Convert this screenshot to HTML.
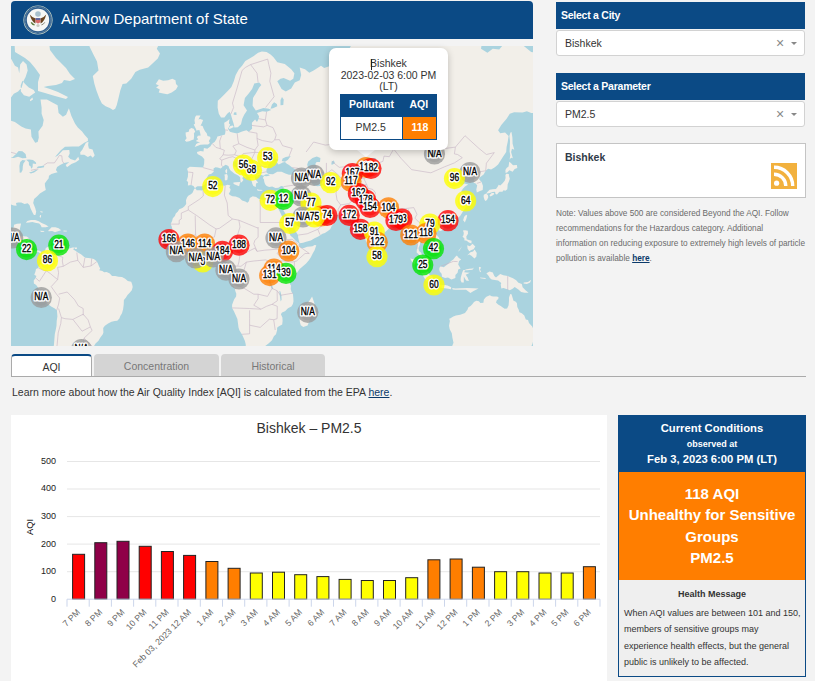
<!DOCTYPE html>
<html><head><meta charset="utf-8">
<style>
*{margin:0;padding:0;box-sizing:border-box}
html,body{width:815px;height:681px;overflow:hidden;background:#f3f3f3;font-family:"Liberation Sans",sans-serif;color:#333}
.abs{position:absolute}
.hdr{left:11px;top:1px;width:522px;height:38px;background:#0b4a85;border-radius:4px 4px 0 0}
.hdr .t{position:absolute;left:50px;top:9px;font-size:15px;color:#fff;line-height:17px;white-space:nowrap}
.seal{position:absolute;left:12px;top:4px;width:30px;height:30px}
.mapwrap{left:11px;top:46px;width:522px;height:300px;overflow:hidden}
.map{display:block}
.ml{font:bold 10px "Liberation Sans",sans-serif;letter-spacing:-0.2px;fill:#fff;text-anchor:middle;stroke:#fff;stroke-width:3.2px;stroke-linejoin:round}
.ml2{font:normal 10px "Liberation Sans",sans-serif;letter-spacing:0px;fill:#000;text-anchor:middle;stroke:#000;stroke-width:0.35px}
.popup{left:329px;top:48px;width:119px;height:102px;background:#fff;border-radius:7px;box-shadow:0 2px 7px rgba(0,0,0,.22)}
.tip{left:357px;top:150px;width:0;height:0;border-left:9px solid transparent;border-right:9px solid transparent;border-top:7px solid #fff}
.pt{position:absolute;left:0;width:119px;text-align:center;font-size:10.5px;line-height:11.5px;color:#333;white-space:nowrap}
.ptab{position:absolute;left:10.5px;top:46px;width:97px;height:45.5px;border:1px solid #0b4a85;border-collapse:collapse}
.sh{left:556px;width:249px;height:27px;background:#0b4a85;color:#fff;font-weight:bold;font-size:10.5px;line-height:27px;padding-left:5px;letter-spacing:-0.25px}
.sel{left:556px;width:249px;height:26px;background:#fff;border:1px solid #d2d2d2;border-radius:3px;font-size:10.5px;line-height:24px;padding-left:8px;color:#333}
.sel .x{position:absolute;left:219px;top:0px;color:#888;font-size:14px;font-weight:300}
.sel .ar{position:absolute;left:234px;top:11px;width:0;height:0;border-left:3px solid transparent;border-right:3px solid transparent;border-top:3.5px solid #888}
.box{left:556px;top:143px;width:250px;height:55px;background:#fff;border:1px solid #c4c4c4}
.box .b{position:absolute;left:8px;top:7px;font-weight:bold;font-size:10.5px;color:#2f3a48}
.rss{position:absolute;left:214px;top:19px;width:26px;height:26px;background:#f2b13e}
.note{left:556px;top:207px;width:259px;white-space:nowrap;font-size:8.25px;line-height:14.9px;color:#6b6b6b}
.note a,.learn a{color:#0b3a6a;font-weight:bold;text-decoration:underline}
.tab{top:354px;height:22px;font-size:10.5px;line-height:20px;text-align:center;border-radius:4px 4px 0 0}
.tab1{left:11px;width:81px;background:#fff;border:1px solid #aaa;border-top:2px solid #0b4a85;border-bottom:none;color:#333;line-height:22px}
.tab2{left:94px;width:125px;background:#d4d4d4;color:#777;line-height:25px}
.tab3{left:221px;width:104px;background:#d4d4d4;color:#777;line-height:25px}
.tline{left:11px;top:376px;width:795px;height:1px;background:#aaa}
.learn{left:12px;top:386px;font-size:10.5px;line-height:12px;color:#333;white-space:nowrap}
.learn a{font-weight:normal;color:#0b3a6a}
.chartp{left:11px;top:415px;width:596px;height:266px;background:#fff}
.ct{font-size:14px;fill:#333;text-anchor:middle;font-family:"Liberation Sans",sans-serif}
.yl{font-size:9px;fill:#222;text-anchor:end;font-family:"Liberation Sans",sans-serif}
.xl{font-size:8.7px;fill:#666;text-anchor:end;font-family:"Liberation Sans",sans-serif}
.at{font-size:9.3px;fill:#111;text-anchor:middle;font-family:"Liberation Sans",sans-serif}
.cc{left:618px;top:415px;width:188px;height:262px;border:1px solid #0b4a85;background:#efefef}
.cch{position:absolute;left:0;top:0;width:186px;height:56px;background:#0b4a85;color:#fff;text-align:center;font-weight:bold}
.cco{position:absolute;left:0;top:56px;width:186px;height:108px;background:#ff7e00;color:#fff;text-align:center;font-weight:bold;font-size:15px;line-height:21.4px}
.hm{position:absolute;left:0;top:164px;width:186px;color:#333}
</style></head><body>
<div class="abs hdr">
 <svg class="seal" viewBox="0 0 30 30">
  <circle cx="15" cy="15" r="14.6" fill="#c8d6c8"/>
  <circle cx="15" cy="15" r="13.9" fill="#2c5c8c"/>
  <circle cx="15" cy="15" r="12.9" fill="none" stroke="#9fb6c6" stroke-width="0.7" stroke-dasharray="0.8 0.6"/>
  <circle cx="15" cy="15" r="11.2" fill="#f6f7f5"/>
  <circle cx="15" cy="9" r="2.8" fill="#a8c0cc"/>
  <path d="M6.8 9.5 Q9 12.5 12.6 13.6 L12.4 18.5 Q8.5 16.5 6.8 9.5Z M23.2 9.5 Q21 12.5 17.4 13.6 L17.6 18.5 Q21.5 16.5 23.2 9.5Z" fill="#6a4520"/>
  <path d="M12.6 13.2 h4.8 v3.8 q-2.4 2.8 -4.8 0z" fill="#d86a6a"/>
  <path d="M12.6 13.2 h4.8 v1.6 h-4.8z" fill="#3a62a8"/>
  <path d="M8.2 17.3 q1.4 2.4 3.4 2.6" stroke="#5d7d3d" stroke-width="1.4" fill="none"/>
  <path d="M21.8 17.3 q-1.4 2.4 -3.4 2.6" stroke="#8a8a7a" stroke-width="1" fill="none"/>
  <circle cx="15" cy="20.5" r="1.6" fill="#c8c8c0"/>
 </svg>
 <div class="t">AirNow Department of State</div>
</div>
<div class="abs mapwrap">
<svg class="map" width="522" height="300" viewBox="0 0 522 300">
<rect width="522" height="300" fill="#aad3df"/>
<path d="M-81.4 -23.2L-17.4 -23.2L-8.9 -4.1L-5.7 0.7L-2.5 9.3L0.7 13.7L3.9 19.8L7.1 21.5L8.2 27.2L9.2 18.6L12.0 14.9L15.6 18.6L16.7 24.4L14.6 31.1L12.4 35.3L10.7 41.5L7.1 45.4L2.8 47.8L-1.4 53.5L-5.7 62.3L-6.1 68.7L-2.5 73.9L3.9 75.9L10.3 80.5L14.6 82.4L19.9 83.5L20.5 90.8L24.2 96.7L26.7 96.0L27.8 91.5L27.4 85.4L31.6 79.8L32.7 73.9L30.6 67.8L30.6 61.5L29.5 53.5L35.9 53.5L42.3 57.1L46.6 59.3L47.6 67.0L51.9 70.7L55.1 68.7L57.9 62.3L60.4 69.9L64.1 77.8L66.8 81.6L71.1 85.4L73.7 89.0L76.9 92.5L76.9 95.0L73.2 96.7L67.9 100.4L61.5 100.4L54.0 100.7L49.8 104.3L45.5 109.2L44.0 111.0L46.6 109.8L51.9 104.3L58.3 104.0L58.7 107.6L57.2 110.7L59.4 112.9L64.1 114.4L67.3 110.7L68.3 113.8L64.7 116.3L60.4 118.1L56.0 121.3L54.7 119.0L58.3 116.0L53.0 116.9L49.1 119.0L46.1 121.0L44.9 124.0L46.6 126.3L43.8 127.1L40.4 128.0L38.0 129.7L37.6 132.5L35.9 134.4L33.8 137.4L34.0 140.1L34.8 144.0L32.1 145.6L28.9 147.6L26.5 150.0L23.1 153.0L22.2 157.0L24.2 161.9L25.2 165.7L24.4 169.0L22.9 169.0L21.4 166.2L19.5 162.3L18.6 159.2L16.7 157.2L13.5 157.9L10.3 156.5L7.1 156.5L5.0 157.0L5.6 159.7L2.8 159.4L-0.4 158.4L-4.6 158.4L-8.9 161.4L-11.7 164.3L-12.1 168.3L-12.5 175.3L-11.5 179.9L-9.3 183.1L-6.3 184.9L-1.4 184.2L1.3 183.8L2.8 181.0L3.0 178.8L6.0 177.8L10.1 177.6L9.2 181.5L8.6 184.9L7.5 186.7L7.5 190.0L9.2 190.5L12.4 190.2L15.6 190.5L18.2 192.2L17.8 195.5L17.6 199.2L17.3 201.2L19.7 204.0L22.0 205.3L25.2 204.7L27.8 204.5L30.8 206.0L32.7 205.8L34.2 204.2L34.8 201.9L37.6 200.6L40.8 199.5L42.9 197.9L44.0 199.2L42.7 201.0L43.4 203.2L44.4 201.4L46.1 199.9L46.8 198.6L48.3 199.9L50.2 201.6L54.0 201.9L58.3 202.5L61.5 201.6L63.8 201.6L62.1 203.2L64.7 204.9L66.8 206.6L70.0 208.3L72.6 210.5L74.3 211.8L77.5 212.0L80.7 212.4L82.8 213.1L85.4 215.0L86.7 217.1L88.0 220.3L89.2 222.5L88.2 224.2L91.4 225.0L93.1 226.3L95.6 226.1L98.8 227.4L101.0 230.1L104.2 229.9L107.4 230.8L111.0 231.0L114.2 232.7L116.8 235.1L120.2 235.7L121.2 238.5L121.7 240.9L120.8 244.3L118.7 246.7L116.5 248.9L114.8 251.7L112.9 253.9L112.7 258.7L112.1 263.2L111.0 267.3L109.3 270.0L108.4 272.5L106.3 274.8L103.7 275.0L100.5 275.7L97.1 277.4L93.9 279.7L92.2 282.1L92.4 286.4L91.8 288.3L89.2 291.7L87.5 294.7L84.5 297.5L82.8 300.5L80.3 303.4L76.4 304.1L73.2 305.7L73.9 308.3L67.9 317.9L42.3 317.9L39.1 309.7L41.2 305.2L42.9 299.2L43.4 293.0L43.8 288.1L44.6 284.5L45.5 279.7L45.7 275.0L46.4 270.4L45.9 264.3L43.4 262.3L40.6 260.7L35.9 257.6L33.1 254.3L32.1 251.0L30.4 248.2L28.9 245.2L26.9 241.5L25.2 239.1L22.9 237.4L22.7 234.4L24.6 231.9L25.4 229.9L23.3 228.7L24.4 225.7L25.0 223.1L27.2 222.0L28.2 219.3L30.6 217.1L31.0 214.3L30.8 210.7L29.7 209.0L28.9 207.0L26.3 205.5L24.8 206.8L24.4 208.8L22.7 208.3L21.0 207.0L17.6 206.6L15.0 203.6L13.1 202.7L12.6 200.6L9.7 196.8L7.1 196.2L2.8 194.7L-1.0 193.3L-4.6 190.0L-10.0 190.7L-14.2 189.3L-28.1 181.0L-81.4 181.0ZM3.0 -11.4L37.0 -11.4L39.0 4.0L45.0 12.0L49.0 16.0L55.0 22.0L59.0 28.0L64.0 33.0L59.0 35.0L53.0 34.0L51.0 37.0L45.0 39.0L37.0 40.0L32.7 41.0L39.0 43.0L47.0 46.0L57.0 51.0L55.0 53.0L44.0 50.0L34.0 47.0L27.0 45.0L27.0 36.0L29.0 29.0L24.0 22.0L19.0 16.0L14.0 12.0L9.0 9.0L4.0 6.0ZM9.9 45.4L12.9 49.3L18.2 50.7L24.2 46.4L22.7 44.0L17.8 41.5L14.1 37.9L11.4 34.8L9.7 39.5ZM18.8 53.9L21.4 51.6L22.0 53.5L19.3 55.3ZM-4.6 -2.0L-6.8 -11.4L-0.4 -19.2L25.2 -19.2L25.2 -6.3ZM40.2 -56.0L42.3 -36.2L55.1 -31.8L71.1 -27.4L75.4 -15.2L78.6 0.7L82.8 9.3L86.0 15.6L87.5 24.4L81.8 30.0L83.3 37.4L85.4 44.4L88.2 52.1L90.9 57.5L94.6 60.2L98.8 61.9L102.0 64.1L104.2 62.8L105.7 59.3L107.4 52.5L109.3 44.4L111.6 37.9L115.3 37.4L120.2 32.7L124.4 26.1L128.7 23.8L137.2 21.5L141.5 17.4L146.8 12.5L149.0 7.4L145.8 2.8L149.0 -4.1L152.2 -15.2L155.4 -31.8L153.2 -73.2ZM144.7 37.9L147.9 33.2L152.2 34.8L157.1 34.3L161.3 32.7L164.5 34.3L165.0 37.9L166.9 40.0L165.0 43.5L160.7 46.4L156.4 48.3L152.2 47.4L147.7 46.4L148.8 43.5L145.1 41.5L147.9 39.5ZM69.4 108.8L73.2 108.8L76.9 111.0L79.6 109.5L81.8 111.7L83.7 109.2L82.4 106.0L81.6 103.4L77.9 102.4L77.1 99.1L77.5 95.7L74.9 96.7L73.2 100.1L71.3 103.7L69.2 106.3ZM14.8 176.7L16.3 175.1L19.9 173.9L24.2 173.9L27.8 175.3L30.6 176.9L34.2 178.5L37.6 180.6L34.8 181.3L30.6 181.3L29.9 179.4L28.2 177.4L24.2 176.7L21.4 176.0L17.8 176.5ZM37.2 184.7L40.6 181.3L44.4 181.3L47.6 182.2L50.2 184.2L47.6 184.9L44.0 186.2L41.2 185.1L37.6 185.3ZM28.9 184.7L33.1 184.9L33.3 185.8L30.6 186.0L28.9 185.1ZM52.5 184.4L56.0 184.7L55.7 185.6L52.5 185.6ZM63.8 201.4L66.0 201.4L65.8 202.9L63.8 202.9ZM29.1 165.2L31.6 165.5L31.4 166.7L29.5 165.9ZM29.1 169.0L30.1 169.3L29.9 171.8L28.6 171.1ZM184.0 142.2L182.5 140.1L180.1 139.0L176.9 139.5L177.1 136.0L175.6 134.7L176.9 130.8L177.1 126.0L176.1 122.8L178.8 120.7L183.5 121.0L188.4 121.3L192.1 121.6L193.1 118.1L193.3 113.2L191.0 110.4L186.5 107.9L185.9 106.0L189.5 105.0L192.5 105.6L192.9 102.1L196.3 102.7L199.3 100.4L201.2 97.4L203.6 96.0L205.5 92.9L206.4 90.4L210.6 89.4L214.0 88.6L214.5 85.0L213.6 81.6L213.2 76.7L216.2 75.1L218.5 73.1L217.9 77.4L219.2 78.6L217.0 82.8L218.9 85.7L221.5 86.5L226.2 87.6L231.1 85.4L235.4 84.3L237.7 85.7L241.1 82.8L240.9 76.7L244.1 73.5L246.0 75.9L247.7 72.7L248.0 70.3L246.0 67.0L251.4 65.3L255.6 65.7L260.3 64.1L257.8 62.8L252.4 61.9L244.8 64.5L241.6 59.7L242.0 52.1L246.0 45.4L248.2 41.5L250.3 38.9L248.2 36.4L243.3 37.4L241.1 43.0L237.5 47.8L233.9 52.1L232.6 59.3L236.0 64.5L233.2 68.7L231.3 72.7L230.0 78.2L226.8 81.3L223.4 81.6L222.8 78.2L221.3 73.5L219.8 68.2L218.5 65.7L216.2 67.8L213.4 71.5L210.0 71.5L207.8 67.8L206.6 61.5L206.8 54.8L209.8 52.1L214.0 47.8L217.2 44.4L220.4 41.0L222.8 35.3L224.7 28.9L227.9 23.2L231.1 19.8L234.3 14.9L238.6 12.5L242.8 10.0L247.1 6.7L250.9 5.4L255.6 6.1L259.9 8.7L262.5 11.2L266.3 16.2L273.8 18.0L280.2 23.2L283.4 27.2L282.3 32.7L279.1 34.8L272.7 32.1L269.5 32.7L266.3 35.3L270.6 43.0L274.8 45.4L280.2 42.5L283.8 36.4L288.7 34.3L290.2 28.9L288.7 21.5L294.0 23.2L298.3 26.7L302.6 24.4L310.0 19.8L313.2 22.1L319.6 19.8L323.9 20.9L325.6 13.7L331.4 15.6L336.7 18.6L339.3 21.5L341.4 19.8L338.4 15.6L338.8 7.4L338.4 2.8L342.0 -4.1L344.2 -7.7L345.2 -23.2L409.2 -50.8L437.0 -15.2L447.6 -12.2L464.7 -11.4L471.1 -4.1L470.0 2.8L476.4 6.7L481.8 2.8L488.2 3.4L493.5 -2.7L498.8 -4.8L509.5 -2.7L520.2 6.1L533.0 7.4L558.6 12.5L569.2 54.8L558.6 83.5L530.8 97.7L528.7 75.9L541.5 57.1L537.2 54.8L526.6 66.6L520.2 67.0L515.9 65.3L511.6 66.6L503.1 66.2L498.8 67.8L495.6 72.7L490.3 79.0L487.1 84.3L489.2 87.2L494.1 86.5L497.6 90.1L496.7 96.0L495.6 101.1L495.2 106.0L492.0 110.7L487.1 118.4L483.9 121.3L480.1 123.4L477.1 122.8L474.7 124.8L472.6 128.5L469.0 131.3L467.9 133.0L470.7 136.3L472.0 140.1L471.7 144.0L469.0 145.1L465.8 146.4L465.3 143.5L466.2 139.5L464.7 137.4L462.6 136.8L463.4 133.0L461.7 131.6L458.3 131.9L455.1 134.4L456.0 131.3L456.8 129.7L454.0 128.8L450.8 131.6L448.1 133.8L446.8 135.5L448.7 137.9L450.8 139.3L453.4 137.4L457.2 138.5L454.0 140.6L451.9 142.7L450.2 145.3L452.5 146.9L453.8 151.0L456.0 153.2L454.0 155.5L456.2 157.5L455.1 160.9L453.2 163.5L451.0 167.1L449.3 169.7L446.6 172.3L443.4 174.4L439.5 175.8L437.0 176.5L433.8 177.4L431.4 178.3L431.2 180.4L430.1 177.8L427.4 177.2L424.2 178.8L423.1 180.6L421.6 183.3L423.3 186.7L425.9 189.3L428.0 191.8L429.1 196.2L428.9 199.7L426.7 201.0L424.2 202.3L422.5 204.2L420.1 206.2L419.5 203.8L419.9 202.1L417.8 201.9L415.6 201.0L414.1 198.4L411.4 197.3L411.2 195.5L409.2 195.7L409.0 198.4L407.5 202.1L408.0 204.9L409.9 206.6L411.4 209.8L413.9 211.3L415.6 212.8L416.5 215.4L416.5 218.6L418.2 221.4L416.7 221.8L414.6 220.5L412.0 218.6L410.5 216.1L409.9 212.8L409.4 210.5L407.1 207.7L405.6 206.4L406.0 202.1L406.5 198.8L405.4 195.5L404.5 191.1L403.9 188.7L401.8 188.2L399.4 190.5L397.1 190.0L397.5 186.7L396.9 183.8L395.4 181.9L393.9 179.2L392.6 177.6L391.7 175.1L389.2 176.0L386.8 176.7L384.7 177.4L381.5 178.5L381.3 180.1L378.9 181.5L376.2 184.2L373.6 186.4L371.5 188.7L369.1 191.3L367.0 194.7L366.8 197.7L366.1 200.6L364.9 202.7L363.2 205.3L361.2 207.3L359.1 205.3L357.6 200.3L355.5 196.8L354.2 192.7L352.7 188.9L351.6 184.4L351.2 181.0L351.0 178.1L350.6 175.8L347.4 178.8L345.2 178.8L343.1 175.8L345.7 174.4L342.7 172.8L339.5 170.7L338.0 168.5L333.5 169.0L328.2 169.3L322.8 168.5L319.2 167.8L317.5 165.2L315.8 164.5L312.8 165.9L309.6 164.7L305.8 162.6L303.6 159.4L302.6 157.0L300.0 157.2L298.3 158.7L299.2 161.6L300.9 164.3L302.6 165.9L303.0 168.1L303.8 169.5L304.7 166.9L306.0 167.4L306.0 169.5L305.6 171.1L307.9 171.4L311.1 171.4L313.7 169.3L315.4 167.6L316.0 166.4L316.2 169.5L317.1 171.4L319.2 172.5L321.3 173.2L323.5 175.5L322.4 178.1L320.7 180.1L319.2 183.3L316.9 184.9L313.9 186.9L311.5 187.8L307.3 190.5L303.6 192.2L299.8 194.4L295.1 195.7L292.1 196.8L288.7 197.3L288.1 195.5L287.2 191.8L287.0 188.9L285.1 186.0L283.2 182.6L280.4 179.7L279.3 176.9L278.2 173.0L275.9 170.0L274.0 167.1L271.6 163.1L270.1 161.1L270.6 158.7L269.5 156.2L268.9 154.2L269.9 152.0L270.8 149.4L272.3 145.8L272.5 143.2L272.7 140.6L270.1 140.1L267.4 141.7L264.4 141.9L261.2 140.6L258.2 140.9L255.6 140.1L254.1 138.2L253.3 136.0L252.9 133.3L251.8 131.9L253.1 130.0L256.7 128.8L258.2 128.0L256.7 128.5L253.9 128.8L252.2 129.7L250.3 128.8L247.1 129.1L246.2 130.8L244.1 130.0L244.1 133.0L245.4 134.4L247.1 136.6L245.0 137.4L244.8 140.9L243.0 140.3L242.2 139.8L241.3 137.7L240.9 136.0L240.1 133.8L238.8 132.2L237.3 130.2L237.5 127.1L236.0 124.8L233.2 122.8L230.0 121.3L228.1 119.0L226.4 116.9L224.9 116.3L225.1 114.7L222.4 115.7L222.1 118.7L223.0 120.2L224.9 121.3L226.2 124.3L227.9 126.0L230.2 126.0L230.0 127.4L232.8 129.1L235.4 131.1L234.9 131.9L232.4 130.2L231.3 132.2L232.4 134.1L231.1 135.8L229.8 136.8L229.4 134.4L229.2 131.3L227.5 129.7L225.8 128.8L223.6 127.7L221.5 126.0L219.6 124.5L218.3 122.5L217.4 119.9L214.7 118.7L211.9 120.5L209.8 122.5L206.6 121.6L204.4 121.3L202.5 122.5L202.7 125.7L200.4 127.7L197.8 128.5L195.9 131.6L195.3 133.3L196.3 134.9L194.6 136.3L194.2 137.9L192.3 139.5L191.2 140.3L186.5 140.3L185.2 141.1ZM183.3 142.7L181.4 146.9L179.5 148.4L177.6 149.4L176.1 151.2L175.0 154.2L175.2 157.9L173.5 160.2L171.4 161.9L168.2 163.3L166.9 165.5L164.8 167.4L163.9 170.0L161.8 172.3L161.1 175.1L159.6 178.1L160.7 180.4L161.3 182.9L160.9 186.7L160.1 190.9L158.6 192.9L159.6 194.7L160.1 197.3L161.3 198.8L163.5 200.8L165.4 202.7L167.1 204.7L168.4 206.8L170.3 209.2L172.4 210.5L175.0 212.6L178.4 214.8L180.1 215.2L183.1 214.1L185.2 213.7L188.4 213.7L191.2 214.3L193.8 213.3L197.0 212.2L199.7 211.3L202.3 210.9L205.3 211.1L207.0 212.6L208.5 215.4L210.8 215.2L213.8 214.8L215.7 216.3L216.8 218.2L216.8 220.3L216.0 222.5L215.7 225.2L214.9 226.7L216.4 229.9L218.9 232.1L221.1 234.4L221.9 237.0L222.6 240.0L223.8 242.4L224.3 245.0L225.3 247.8L225.1 250.4L223.2 253.2L222.1 255.9L221.1 258.7L221.1 261.9L222.8 265.0L224.5 268.8L226.4 273.0L226.8 276.0L227.5 281.6L228.5 284.5L230.9 288.3L232.4 291.5L233.9 295.0L234.7 298.2L234.9 301.6L235.6 303.1L238.6 303.9L243.9 301.8L248.2 302.1L250.9 301.3L254.6 299.8L257.8 297.2L261.0 294.2L262.9 290.3L265.0 288.3L266.1 284.2L266.1 281.8L267.6 280.4L271.2 278.5L271.6 275.0L271.4 271.6L269.9 268.2L271.0 266.6L274.0 265.2L277.0 262.3L280.4 260.5L281.9 258.1L282.5 255.2L282.3 251.7L281.9 247.8L280.6 246.0L279.7 243.0L280.0 239.6L278.9 237.9L279.5 234.9L281.0 232.7L282.5 229.9L284.4 228.4L286.4 226.3L288.7 223.1L291.9 220.3L295.1 217.6L297.9 214.3L300.0 211.1L301.7 207.5L303.6 204.2L304.5 201.6L305.3 199.2L303.6 199.0L301.5 200.3L299.4 200.6L296.2 200.8L293.0 201.9L290.8 202.3L288.9 201.0L288.1 199.7L287.4 198.8L288.3 197.7L286.6 196.2L284.6 194.7L283.2 192.9L281.2 191.1L279.7 190.0L278.2 186.7L277.0 184.2L275.7 180.6L275.3 178.5L274.6 176.2L272.3 173.0L271.6 171.8L270.1 168.3L268.4 164.7L267.4 162.8L265.9 160.2L265.2 157.9L265.7 157.9L266.9 161.1L268.9 162.8L269.5 161.9L270.4 158.7L269.1 154.5L267.4 154.7L264.6 154.5L262.0 153.5L259.9 154.0L257.8 155.2L254.6 154.2L249.7 153.5L247.1 152.5L245.2 151.0L241.8 150.2L238.8 152.0L237.9 155.2L236.4 156.7L234.3 155.5L231.1 154.5L228.5 152.0L224.7 150.5L221.5 150.2L219.8 149.4L217.7 147.9L219.2 145.3L219.6 143.2L218.3 141.4L219.4 139.5L217.7 139.0L216.2 138.7L214.0 139.8L209.8 139.5L206.6 140.3L202.9 140.1L200.2 140.6L198.0 141.1L194.8 142.7L192.7 144.0L191.0 144.5L188.4 144.3L185.7 144.3L184.6 142.4ZM301.1 250.4L303.0 255.9L303.6 258.3L301.9 261.4L301.3 265.4L300.0 269.3L298.3 275.0L296.6 279.5L292.3 280.9L289.8 279.2L288.9 276.2L288.5 272.3L290.4 268.6L290.4 265.4L289.8 261.9L291.9 259.6L295.1 258.5L297.2 256.5L298.9 253.9ZM366.4 203.6L367.4 204.0L369.1 206.4L370.4 208.8L370.0 210.9L367.6 212.0L366.6 211.1L366.1 208.6L366.1 205.8ZM183.7 101.1L186.9 99.7L189.5 98.7L193.3 98.4L197.0 98.4L198.9 97.0L197.8 95.0L199.5 92.2L199.1 90.8L196.5 90.1L195.7 87.2L194.2 85.4L192.7 82.8L191.6 80.1L189.5 79.4L190.6 77.8L192.1 73.9L189.1 73.1L187.4 73.5L189.5 69.5L185.2 69.5L184.2 71.1L183.5 74.3L184.0 77.8L182.7 78.6L184.2 81.6L185.2 83.5L185.2 84.6L188.4 83.9L189.1 86.8L189.7 89.4L186.9 89.7L185.9 91.5L187.2 93.2L184.8 95.0L186.7 95.7L189.1 96.3L186.9 97.0L185.2 98.0ZM182.7 93.6L183.1 90.1L182.9 87.6L184.2 85.4L182.7 82.8L180.3 82.0L178.2 83.5L177.8 85.7L174.6 86.5L174.8 89.4L175.6 92.2L173.9 94.6L175.4 95.7L178.2 95.3L181.0 93.9ZM222.4 136.6L224.7 136.3L229.2 136.0L228.1 140.3L226.2 139.5L222.6 137.9ZM213.4 128.5L216.0 128.0L216.8 130.0L216.4 133.8L214.9 134.4L213.8 134.1L213.8 130.5ZM214.2 124.8L215.7 122.8L216.2 124.0L216.0 127.4L214.7 126.8ZM246.0 143.2L248.2 143.8L252.0 144.0L250.3 144.8L247.1 144.8L246.0 144.0ZM264.8 144.8L267.4 144.0L269.7 143.0L268.2 145.1L266.1 145.8L265.0 145.6ZM218.3 83.1L219.8 82.4L222.8 80.9L221.7 79.4L219.4 80.1L217.7 82.0ZM475.2 147.6L476.4 146.1L478.6 143.8L481.8 143.2L485.0 143.0L486.5 141.1L487.7 138.7L489.2 139.5L491.4 137.4L493.7 134.7L494.6 131.9L494.4 129.1L495.4 127.7L497.8 128.0L498.0 130.0L498.8 132.7L497.8 135.8L496.7 138.2L496.5 140.9L496.3 143.2L494.4 144.8L492.6 144.3L491.4 145.8L488.6 145.8L487.7 146.6L486.0 148.4L484.5 147.9L484.1 145.8L481.6 146.1L478.6 146.9L476.0 147.6ZM472.8 148.7L475.2 147.6L476.9 149.2L477.3 151.2L476.0 154.0L474.3 155.0L473.4 153.5L472.6 150.7ZM478.4 149.2L480.7 146.9L482.8 146.9L483.3 147.9L481.8 149.2L479.6 150.5ZM494.6 127.1L494.4 124.0L495.6 121.9L497.6 120.5L498.2 115.7L499.9 116.9L502.0 119.3L505.9 119.0L506.3 121.9L503.7 123.1L501.6 125.7L498.4 124.3L496.5 126.3ZM498.6 113.5L500.1 111.7L501.8 112.3L501.0 109.2L500.1 106.0L501.0 102.7L503.3 103.7L501.6 97.7L501.4 91.5L500.5 86.1L499.5 86.5L498.4 89.7L499.0 95.0L498.8 100.4L498.6 105.6L499.3 109.2ZM452.1 174.2L453.2 170.7L455.1 168.8L456.2 169.5L455.3 173.0L453.8 176.5L453.2 175.5ZM427.6 182.9L429.5 181.0L431.6 180.8L432.7 181.9L431.2 184.2L429.5 185.1L427.8 184.4ZM451.9 184.4L454.0 184.2L456.8 184.7L457.0 187.8L455.3 190.5L455.7 193.3L457.9 194.0L460.6 194.7L460.4 197.5L457.9 196.6L455.7 194.7L453.2 194.2L453.6 192.7L451.5 190.5L452.5 189.3L452.8 186.7ZM456.2 209.6L459.4 206.2L462.1 205.5L463.6 203.6L465.8 207.0L465.3 210.7L463.4 212.6L460.4 209.8L458.3 208.6ZM456.2 199.2L458.9 200.3L461.5 197.7L464.3 200.6L462.6 203.2L460.4 204.0L458.3 205.3L456.6 202.7ZM445.9 206.6L448.7 204.2L451.0 200.3L450.4 201.0L446.8 205.8ZM428.4 221.8L429.7 220.3L432.7 221.2L437.0 218.0L440.2 215.0L442.3 213.5L444.4 210.7L445.9 209.6L447.6 211.8L450.2 213.5L448.1 215.0L447.2 218.6L449.6 222.5L447.2 223.5L446.6 226.7L444.4 228.9L444.4 232.1L440.4 233.4L437.0 231.4L434.2 232.1L431.0 230.8L430.6 227.8L428.9 225.7L428.2 223.5ZM399.2 212.6L403.9 213.5L406.7 216.9L409.9 219.7L412.6 221.2L415.6 223.5L417.3 226.7L418.8 229.3L422.0 231.0L421.8 235.3L421.4 237.2L418.8 237.0L415.6 234.9L413.5 232.3L410.9 227.8L408.8 224.6L406.7 221.4L403.9 218.6L401.1 216.1ZM420.3 239.1L422.2 237.2L425.2 237.4L427.6 238.7L431.6 239.1L434.0 238.9L436.5 239.4L440.2 241.3L440.0 243.2L435.9 242.6L431.6 241.9L427.4 241.3L422.9 240.4L420.8 239.6ZM441.2 241.9L444.4 242.4L449.8 242.2L456.2 241.9L462.6 242.2L467.5 242.6L462.6 245.0L459.4 246.9L455.1 243.7L449.8 243.7L444.4 243.7L441.7 243.4ZM450.6 236.4L452.8 236.6L452.8 230.4L455.1 234.4L457.9 234.9L456.6 231.4L454.7 228.7L458.9 226.7L455.7 226.5L453.2 226.3L454.5 223.5L458.3 222.7L461.5 222.5L463.0 221.4L461.5 223.7L456.2 224.2L452.3 224.0L451.3 226.3L449.8 231.6L449.6 234.2ZM467.9 220.8L470.2 221.4L469.0 223.5L470.2 226.3L468.8 225.7L468.1 223.3ZM469.0 231.4L474.9 231.9L474.3 232.9L469.4 232.3ZM475.4 227.2L478.6 225.5L481.8 226.5L483.3 229.9L485.0 231.6L489.2 228.0L492.4 229.3L496.7 230.1L502.0 232.3L505.2 234.2L507.4 236.8L510.8 238.1L511.6 241.3L514.8 244.5L517.6 246.7L513.8 246.7L510.1 246.0L507.4 243.4L503.7 241.1L501.6 242.8L498.8 244.3L496.3 243.2L492.4 241.9L490.3 242.6L489.7 238.5L490.3 237.0L487.1 234.4L483.9 234.0L480.7 233.6L478.8 232.1L477.7 230.1L476.0 228.0ZM512.7 236.4L517.0 235.9L520.2 233.8L519.1 236.4L515.9 238.1L512.5 237.4ZM438.2 272.7L439.5 272.3L442.3 270.4L444.9 269.5L449.3 268.8L454.0 267.0L456.6 263.6L457.2 261.4L459.6 259.9L461.5 257.9L463.0 256.1L465.3 254.8L467.9 255.2L469.4 257.0L472.4 256.8L472.8 253.7L474.1 252.1L475.4 250.8L478.8 249.3L480.7 250.2L482.8 250.4L485.6 250.4L487.5 251.0L487.3 253.0L485.8 254.3L485.0 256.5L487.1 258.5L489.7 259.9L491.8 261.4L493.7 262.8L496.1 262.5L497.6 259.2L498.0 254.8L498.0 251.5L499.3 248.0L500.5 248.2L501.6 251.7L502.5 254.8L504.4 255.4L505.9 257.0L506.3 261.0L507.6 263.6L508.4 266.3L510.8 267.3L513.3 269.5L514.8 273.4L517.0 274.1L518.0 277.1L521.2 280.4L522.5 283.5L523.6 288.3L522.7 293.0L521.4 298.0L520.2 300.5L518.0 304.4L515.9 312.4L473.2 317.9L441.2 307.0L441.0 300.5L442.5 296.7L441.4 291.7L440.8 287.3L438.7 283.3L438.0 279.7L438.9 275.0Z" fill="#f2efe9"/>
<path d="M257.8 128.0L262.0 128.3L266.3 125.7L270.6 125.7L274.4 127.4L278.0 128.8L282.3 128.5L284.6 126.8L284.4 123.4L281.2 121.6L278.0 119.0L275.5 117.5L274.0 116.0L271.6 116.6L269.9 117.5L267.6 118.4L265.2 115.7L267.6 113.8L264.2 112.3L261.6 112.3L259.9 114.4L259.0 116.9L257.3 118.4L256.9 121.3L255.4 123.7L255.6 126.8ZM270.8 115.0L274.0 115.7L277.0 113.8L279.7 110.1L277.4 110.4L274.8 111.0L271.6 112.6ZM253.1 130.0L255.6 130.2L258.8 129.4L257.8 128.5L254.6 128.5ZM296.2 118.4L297.2 122.8L298.7 125.7L300.9 129.1L301.7 130.8L301.1 134.1L300.2 136.3L301.5 138.2L303.6 139.5L306.4 140.3L310.9 139.8L310.9 137.4L310.0 133.3L309.0 131.3L308.3 128.0L308.8 126.0L307.9 124.3L306.0 121.9L304.3 118.1L305.6 116.0L309.0 116.0L309.4 112.0L305.8 110.4L301.5 112.0L299.4 113.8L297.2 115.4ZM320.7 115.4L322.8 114.4L323.9 116.9L321.8 118.4L320.3 118.4ZM417.3 95.7L419.9 95.7L423.1 92.2L426.7 89.0L429.5 84.3L429.7 80.9L428.4 80.5L426.3 85.4L423.7 89.7L420.5 92.5L418.2 94.3ZM352.7 113.8L355.9 112.0L360.2 112.6L364.9 112.0L364.4 113.8L360.2 114.1L354.8 115.0ZM263.7 226.7L265.2 224.2L267.4 224.0L268.6 225.2L268.4 227.2L267.4 229.7L265.2 230.4L263.5 228.9ZM258.0 231.6L258.6 231.6L259.9 236.4L261.2 239.6L262.2 242.8L261.2 243.2L259.0 239.1L258.2 235.3ZM268.4 245.0L269.3 245.2L270.4 249.3L270.6 253.7L269.7 255.4L269.1 251.5L268.6 248.2ZM259.5 62.8L262.0 62.3L266.3 60.2L265.9 58.0L263.1 56.2L261.0 58.4ZM269.5 59.3L272.3 58.9L272.7 53.5L271.0 51.1L269.5 53.9ZM222.6 68.7L225.6 69.1L225.3 66.2L223.0 66.6ZM-0.6 111.7L1.8 111.0L5.0 107.9L7.7 105.0L11.4 105.3L14.6 107.9L15.4 112.0L11.4 112.3L7.1 110.7L2.8 112.0ZM8.6 126.6L10.1 126.8L11.6 124.0L11.8 120.5L12.4 117.5L14.6 114.4L11.4 114.1L9.2 116.0L8.4 119.9L8.6 123.4ZM15.2 113.8L18.2 113.5L22.0 114.1L24.8 116.3L25.2 118.1L21.8 117.5L21.6 121.3L20.1 122.8L19.7 120.5L18.0 119.3L17.8 116.0ZM18.0 126.6L19.9 127.4L23.1 126.6L27.4 123.4L24.6 124.0L21.0 125.7ZM25.7 121.9L29.5 121.9L33.1 121.3L33.1 119.6L30.6 119.9L26.9 120.5Z" fill="#aad3df"/>
<path d="M192.1 144.5L192.3 150.0L188.2 153.5L177.3 160.6L177.3 164.0L185.7 169.5L198.5 178.8L205.1 182.9L208.3 182.4L221.5 173.0L227.9 174.2L247.1 182.2L247.1 181.0M159.4 178.1L168.2 178.1L168.2 174.2L170.3 173.0L170.3 167.1L177.3 164.0M160.7 189.6L166.0 188.7L169.9 192.9L171.6 197.9L178.2 201.0L184.2 202.3L190.1 201.2L195.9 201.0L198.0 197.7L201.9 198.4L203.6 199.5L213.0 196.6L224.9 195.5L226.8 197.7M169.9 192.9L171.4 191.1L184.6 188.9L184.2 169.5M184.6 188.9L187.4 194.4L189.5 195.3L196.3 192.4L203.4 191.1L205.1 182.9M214.2 139.8L213.4 149.2L216.2 157.0L217.2 169.5L221.5 173.0M249.2 153.5L249.2 176.5L274.8 176.5M227.9 174.2L229.0 181.0L224.9 194.4L226.8 197.7L225.8 203.2L229.0 208.6L235.4 206.4L243.9 202.1L246.0 205.3L242.8 197.7L243.9 194.4L247.1 191.1L247.1 182.2M246.0 205.3L253.5 204.2L266.3 203.2L268.4 204.2L271.6 197.7L273.8 193.8L281.2 193.3L286.6 197.7M268.4 204.2L266.3 207.5L272.7 215.0L281.2 216.1L285.5 215.0L294.0 207.5L298.3 207.5L287.6 199.9M214.0 214.8L216.8 209.6L221.1 209.6L224.7 203.2L226.8 197.7M216.8 219.9L220.0 219.9L230.0 220.3L235.4 216.1L242.8 215.0L254.6 213.9L262.0 216.7L268.4 214.8L272.7 215.0M226.8 219.9L227.9 216.1L229.0 208.6M220.0 219.9L220.4 226.7L220.4 229.9L219.6 232.9M221.9 235.3L224.7 234.2L230.0 228.9L233.2 223.5L235.4 216.1M221.9 237.4L232.2 241.7L242.8 248.2L247.1 248.2L256.5 250.4L261.0 242.4L257.8 232.1L259.0 227.6L258.8 224.6L262.0 216.7M268.4 214.8L270.6 221.4L268.4 226.7L279.5 234.6M283.4 228.2L283.4 216.1M259.0 227.6L268.4 226.7M261.0 242.4L266.1 244.7L269.5 249.3L282.3 247.1M247.1 248.2L247.1 252.6L242.8 259.2L249.9 263.2L255.6 260.3L261.0 258.3L266.3 254.8L266.1 244.7M221.1 261.9L238.6 262.5L249.9 263.2M230.9 288.3L238.6 287.8L238.6 279.2L238.6 272.7L238.6 264.3M238.6 279.2L249.2 281.4L258.4 273.2L262.7 273.7L264.2 284.0M261.0 258.3L266.3 260.3L266.1 272.7L262.7 273.7M167.5 204.5L173.5 206.4L177.8 208.3L179.9 215.2M178.2 201.0L178.8 202.1L178.0 208.3M189.5 213.9L190.1 201.2M197.0 211.8L195.9 201.0M201.7 210.9L203.6 199.5M177.1 126.0L182.0 126.6L181.0 132.7L180.1 139.0M192.1 121.6L202.7 124.5M201.2 97.4L204.9 101.4L209.3 102.7L213.4 104.3L212.1 108.8L208.7 112.9L210.8 114.1L210.4 119.3L211.9 120.5M210.6 89.7L208.7 95.0L209.3 102.7M214.2 83.9L217.0 84.3M226.2 87.6L227.0 94.3L227.9 97.7L221.9 100.1L225.3 105.0L223.6 108.8L217.2 109.2L212.1 108.8M210.8 114.1L214.0 112.9L218.3 111.4L221.9 110.7L225.1 112.3L225.1 115.4M227.9 97.7L236.0 101.4L243.9 104.0L247.1 99.4L246.0 92.5L246.0 87.2L237.7 85.7M232.2 107.6L243.9 106.3L243.9 104.0M223.6 108.8L230.5 111.0L232.2 107.6M240.7 79.4L252.6 80.9L256.1 79.4L254.4 73.9L255.6 65.7M247.7 72.7L254.4 73.9M246.0 92.5L251.4 94.6L261.0 96.3L263.7 93.9L265.2 89.0L262.0 81.6L256.1 79.4M263.7 93.9L268.4 93.6L271.6 99.7L281.2 102.4L278.0 110.4M243.9 106.3L252.4 106.9L255.6 106.6L259.9 112.3L259.3 116.3M243.9 106.3L240.7 113.2L236.0 114.1L231.1 112.3L229.4 113.2L225.1 115.4M240.7 113.2L244.1 119.9L256.9 120.7M229.4 116.3L236.4 116.9L235.4 124.3M236.4 116.9L239.0 124.8L244.1 124.8L244.1 119.9M237.3 131.3L239.8 131.1L240.7 125.7M239.8 128.5L244.8 127.7L251.6 126.6L255.6 125.7M219.8 68.2L222.6 61.5L221.5 57.1L225.8 43.0L231.1 24.4L234.3 21.5L239.6 18.6L246.0 27.2L247.1 36.4M239.6 18.6L256.7 13.1L257.8 18.6L259.9 27.2L258.8 35.3L263.1 50.7L254.6 61.5M284.6 126.8L288.7 128.5L291.5 132.2L290.4 138.2L285.9 138.7L274.8 140.3L273.1 140.6M281.2 121.6L286.6 122.2L291.9 124.3L295.1 126.3L299.4 126.3M291.5 132.2L295.1 134.4L298.3 132.7L300.2 135.8M290.4 138.2L293.0 142.7L294.0 150.0L297.2 152.5L299.4 156.7M285.9 138.7L284.0 146.1L279.1 151.7L274.8 153.7L270.6 158.7M279.1 151.7L291.3 159.4L295.1 159.7L298.3 158.7M287.2 189.1L296.2 187.8L306.8 183.3L314.5 176.5L313.7 171.4L305.8 171.1M306.8 183.3L309.0 188.7M310.9 138.7L317.5 136.3L326.0 140.6L325.0 147.4L326.0 154.0L329.7 158.9L327.1 163.5L327.3 169.0M329.7 158.9L337.8 157.7L343.7 152.7L346.3 147.6L347.4 142.2L354.8 139.3M326.0 140.6L333.5 139.5L340.5 139.0L345.2 137.4L348.4 139.8L355.7 138.5M309.0 125.7L315.4 127.7L320.9 123.7L326.7 128.3L333.7 136.3L340.5 139.0M315.4 116.9L315.4 127.7M320.9 115.4L328.2 121.3L334.6 120.7L342.0 128.5L347.4 124.8M295.1 106.0L302.6 96.0L314.3 99.1L327.1 97.7L326.0 87.2L334.6 85.0L345.2 82.8L352.7 87.2L359.1 86.8L362.3 90.8L367.8 97.0L374.0 97.7L382.1 104.0M382.1 104.0L378.3 110.7L373.0 110.1L371.9 115.4L366.6 117.2L367.2 123.1M347.4 124.8L354.4 122.2L363.4 123.1L367.2 123.1L358.0 130.0L352.9 132.7L346.9 130.5L347.4 124.8M346.9 130.5L342.0 132.7L339.9 136.8L345.2 137.4M352.9 132.7L355.7 138.5M383.2 103.7L390.0 112.3L400.7 123.7L419.9 126.8L433.8 120.7L443.4 116.9L451.3 111.7L446.6 108.5L443.4 107.9L444.4 101.1M383.2 103.7L392.2 99.1L405.0 94.3L413.5 96.7L424.2 101.1L432.7 102.7L444.4 101.1M444.4 101.1L454.0 89.7L467.9 102.4L475.4 108.5L483.3 106.6L475.4 117.2L474.7 124.8M461.3 131.3L469.0 125.7L474.7 124.8M465.8 137.4L470.0 136.0M355.7 138.5L357.0 142.2L361.9 143.5L364.4 146.6L363.4 151.2L368.7 157.0L377.2 161.1L384.1 162.6L392.2 162.8L402.8 161.6L406.0 168.3L403.9 172.1L408.2 176.5L411.4 177.6L415.6 175.1L423.3 174.4L426.3 177.6M366.6 160.4L375.1 163.5L384.1 166.2M354.8 139.5L353.8 146.1L355.9 151.2L355.0 155.0L351.6 159.4L347.4 162.8L345.2 170.7L341.6 172.8M384.1 166.2L385.8 169.5L384.1 176.5M392.2 169.5L393.2 177.6M397.5 163.5L396.9 171.8L394.7 176.5L393.2 177.6M409.2 180.4L413.1 185.8L419.3 186.7L421.2 192.2L415.6 193.8L414.6 198.4M415.6 175.1L417.8 183.3L424.2 192.2L422.0 199.9M409.2 210.9L413.5 211.8M409.2 180.4L406.0 185.6L407.1 192.2L406.0 203.2M496.7 230.1L496.7 244.1M429.7 220.3L442.3 215.4L446.6 215.6M-7.2 104.3L4.8 107.6M19.9 124.3L27.4 122.8M32.7 119.3L36.5 116.9L43.4 116.9L46.6 112.3L48.3 109.5L50.8 109.8L51.3 115.0L53.0 117.5M-11.2 167.4L-16.4 163.5L-20.4 157.9L-23.8 159.9L-27.5 157.7L-31.3 153.0M-0.8 193.3L-0.8 191.8L1.3 190.0L3.0 186.0L5.8 186.0L7.5 184.4M5.6 190.2L7.7 194.7M9.7 196.8L12.9 194.9L18.4 192.2M13.1 200.6L17.3 201.2M19.0 207.3L19.7 204.0M31.0 206.4L29.7 209.2M41.9 200.8L41.4 206.8L46.6 209.6L51.9 211.3L51.3 215.0L52.3 220.3M27.4 222.0L31.6 224.0L35.3 224.8L39.1 227.4L46.6 233.6L47.6 226.7L46.6 221.4L52.3 220.3L59.4 216.1L66.8 214.3L65.8 206.6M73.9 211.8L72.2 221.4M80.7 212.4L80.1 219.9M66.8 214.3L72.2 221.4L80.1 219.9L85.8 215.6M24.6 231.9L28.4 235.3L35.3 224.8M46.6 233.6L40.2 240.6L45.5 248.2L48.7 252.1L47.6 258.1L45.7 264.3M47.6 248.2L56.2 246.0L63.6 253.7L67.3 259.9L72.2 262.5L72.2 269.3M47.6 262.5L50.4 271.6L54.0 272.7L61.9 273.4L72.2 268.2M61.9 273.4L71.1 285.2L79.4 280.9L77.1 273.9L72.2 268.2M50.4 271.6L49.8 277.4L47.2 286.9L46.1 299.2L44.4 307.0M79.4 280.9L81.1 284.5L73.0 292.2L82.0 301.0M73.0 292.2L71.3 300.5" fill="none" stroke="#c6b4c4" stroke-width="0.6"/>
<circle cx="423.5" cy="108.0" r="10.6" fill="#9a9a9a" fill-opacity="0.78"/>
<circle cx="423.5" cy="108.0" r="8" fill="#9a9a9a" fill-opacity="0.45"/>
<circle cx="256.7" cy="111.7" r="10.6" fill="#ffff00" fill-opacity="0.78"/>
<circle cx="256.7" cy="111.7" r="8" fill="#ffff00" fill-opacity="0.45"/>
<circle cx="355.0" cy="121.5" r="10.6" fill="#ff7e00" fill-opacity="0.78"/>
<circle cx="355.0" cy="121.5" r="8" fill="#ff7e00" fill-opacity="0.45"/>
<circle cx="360.0" cy="122.5" r="10.6" fill="#ff0000" fill-opacity="0.78"/>
<circle cx="360.0" cy="122.5" r="8" fill="#ff0000" fill-opacity="0.45"/>
<circle cx="240.5" cy="124.2" r="10.6" fill="#ffff00" fill-opacity="0.78"/>
<circle cx="240.5" cy="124.2" r="8" fill="#ffff00" fill-opacity="0.45"/>
<circle cx="232.4" cy="119.0" r="10.6" fill="#ffff00" fill-opacity="0.78"/>
<circle cx="232.4" cy="119.0" r="8" fill="#ffff00" fill-opacity="0.45"/>
<circle cx="459.0" cy="126.5" r="10.6" fill="#9a9a9a" fill-opacity="0.78"/>
<circle cx="459.0" cy="126.5" r="8" fill="#9a9a9a" fill-opacity="0.45"/>
<circle cx="341.4" cy="127.5" r="10.6" fill="#ff0000" fill-opacity="0.78"/>
<circle cx="341.4" cy="127.5" r="8" fill="#ff0000" fill-opacity="0.45"/>
<circle cx="303.0" cy="129.3" r="10.6" fill="#9a9a9a" fill-opacity="0.78"/>
<circle cx="303.0" cy="129.3" r="8" fill="#9a9a9a" fill-opacity="0.45"/>
<circle cx="290.5" cy="132.0" r="10.6" fill="#9a9a9a" fill-opacity="0.78"/>
<circle cx="290.5" cy="132.0" r="8" fill="#9a9a9a" fill-opacity="0.45"/>
<circle cx="443.5" cy="132.6" r="10.6" fill="#ffff00" fill-opacity="0.78"/>
<circle cx="443.5" cy="132.6" r="8" fill="#ffff00" fill-opacity="0.45"/>
<circle cx="340.0" cy="135.5" r="10.6" fill="#ff7e00" fill-opacity="0.78"/>
<circle cx="340.0" cy="135.5" r="8" fill="#ff7e00" fill-opacity="0.45"/>
<circle cx="319.7" cy="136.7" r="10.6" fill="#ffff00" fill-opacity="0.78"/>
<circle cx="319.7" cy="136.7" r="8" fill="#ffff00" fill-opacity="0.45"/>
<circle cx="201.8" cy="140.6" r="10.6" fill="#ffff00" fill-opacity="0.78"/>
<circle cx="201.8" cy="140.6" r="8" fill="#ffff00" fill-opacity="0.45"/>
<circle cx="347.4" cy="147.6" r="10.6" fill="#ff0000" fill-opacity="0.78"/>
<circle cx="347.4" cy="147.6" r="8" fill="#ff0000" fill-opacity="0.45"/>
<circle cx="290.0" cy="150.0" r="10.6" fill="#9a9a9a" fill-opacity="0.78"/>
<circle cx="290.0" cy="150.0" r="8" fill="#9a9a9a" fill-opacity="0.45"/>
<circle cx="354.7" cy="154.0" r="10.6" fill="#ff0000" fill-opacity="0.78"/>
<circle cx="354.7" cy="154.0" r="8" fill="#ff0000" fill-opacity="0.45"/>
<circle cx="259.3" cy="154.3" r="10.6" fill="#ffff00" fill-opacity="0.78"/>
<circle cx="259.3" cy="154.3" r="8" fill="#ffff00" fill-opacity="0.45"/>
<circle cx="272.5" cy="153.3" r="10.6" fill="#00e400" fill-opacity="0.78"/>
<circle cx="272.5" cy="153.3" r="8" fill="#00e400" fill-opacity="0.45"/>
<circle cx="454.7" cy="155.0" r="10.6" fill="#ffff00" fill-opacity="0.78"/>
<circle cx="454.7" cy="155.0" r="8" fill="#ffff00" fill-opacity="0.45"/>
<circle cx="300.0" cy="157.0" r="10.6" fill="#ffff00" fill-opacity="0.78"/>
<circle cx="300.0" cy="157.0" r="8" fill="#ffff00" fill-opacity="0.45"/>
<circle cx="359.0" cy="161.5" r="10.6" fill="#ff0000" fill-opacity="0.78"/>
<circle cx="359.0" cy="161.5" r="8" fill="#ff0000" fill-opacity="0.45"/>
<circle cx="377.5" cy="161.8" r="10.6" fill="#ff7e00" fill-opacity="0.78"/>
<circle cx="377.5" cy="161.8" r="8" fill="#ff7e00" fill-opacity="0.45"/>
<circle cx="338.2" cy="169.4" r="10.6" fill="#ff0000" fill-opacity="0.78"/>
<circle cx="338.2" cy="169.4" r="8" fill="#ff0000" fill-opacity="0.45"/>
<circle cx="310.0" cy="170.0" r="10.6" fill="#ff7e00" fill-opacity="0.78"/>
<circle cx="310.0" cy="170.0" r="8" fill="#ff7e00" fill-opacity="0.45"/>
<circle cx="316.0" cy="169.5" r="10.6" fill="#ff0000" fill-opacity="0.78"/>
<circle cx="316.0" cy="169.5" r="8" fill="#ff0000" fill-opacity="0.45"/>
<circle cx="292.0" cy="171.0" r="10.6" fill="#9a9a9a" fill-opacity="0.78"/>
<circle cx="292.0" cy="171.0" r="8" fill="#9a9a9a" fill-opacity="0.45"/>
<circle cx="303.5" cy="171.0" r="10.6" fill="#ffff00" fill-opacity="0.78"/>
<circle cx="303.5" cy="171.0" r="8" fill="#ffff00" fill-opacity="0.45"/>
<circle cx="391.0" cy="173.0" r="10.6" fill="#ff0000" fill-opacity="0.78"/>
<circle cx="391.0" cy="173.0" r="8" fill="#ff0000" fill-opacity="0.45"/>
<circle cx="385.0" cy="174.5" r="10.6" fill="#ff0000" fill-opacity="0.78"/>
<circle cx="385.0" cy="174.5" r="8" fill="#ff0000" fill-opacity="0.45"/>
<circle cx="437.0" cy="174.7" r="10.6" fill="#ff0000" fill-opacity="0.78"/>
<circle cx="437.0" cy="174.7" r="8" fill="#ff0000" fill-opacity="0.45"/>
<circle cx="278.8" cy="177.5" r="10.6" fill="#ffff00" fill-opacity="0.78"/>
<circle cx="278.8" cy="177.5" r="8" fill="#ffff00" fill-opacity="0.45"/>
<circle cx="419.0" cy="178.0" r="10.6" fill="#ffff00" fill-opacity="0.78"/>
<circle cx="419.0" cy="178.0" r="8" fill="#ffff00" fill-opacity="0.45"/>
<circle cx="349.4" cy="183.3" r="10.6" fill="#ff0000" fill-opacity="0.78"/>
<circle cx="349.4" cy="183.3" r="8" fill="#ff0000" fill-opacity="0.45"/>
<circle cx="363.3" cy="186.0" r="10.6" fill="#ffff00" fill-opacity="0.78"/>
<circle cx="363.3" cy="186.0" r="8" fill="#ffff00" fill-opacity="0.45"/>
<circle cx="415.0" cy="187.5" r="10.6" fill="#ff7e00" fill-opacity="0.78"/>
<circle cx="415.0" cy="187.5" r="8" fill="#ff7e00" fill-opacity="0.45"/>
<circle cx="399.8" cy="189.0" r="10.6" fill="#ff7e00" fill-opacity="0.78"/>
<circle cx="399.8" cy="189.0" r="8" fill="#ff7e00" fill-opacity="0.45"/>
<circle cx="265.0" cy="191.9" r="10.6" fill="#9a9a9a" fill-opacity="0.78"/>
<circle cx="265.0" cy="191.9" r="8" fill="#9a9a9a" fill-opacity="0.45"/>
<circle cx="1.7" cy="192.0" r="10.6" fill="#9a9a9a" fill-opacity="0.78"/>
<circle cx="1.7" cy="192.0" r="8" fill="#9a9a9a" fill-opacity="0.45"/>
<circle cx="158.0" cy="193.5" r="10.6" fill="#ff0000" fill-opacity="0.78"/>
<circle cx="158.0" cy="193.5" r="8" fill="#ff0000" fill-opacity="0.45"/>
<circle cx="366.3" cy="196.3" r="10.6" fill="#ff7e00" fill-opacity="0.78"/>
<circle cx="366.3" cy="196.3" r="8" fill="#ff7e00" fill-opacity="0.45"/>
<circle cx="177.0" cy="198.0" r="10.6" fill="#ff7e00" fill-opacity="0.78"/>
<circle cx="177.0" cy="198.0" r="8" fill="#ff7e00" fill-opacity="0.45"/>
<circle cx="193.6" cy="198.0" r="10.6" fill="#ff7e00" fill-opacity="0.78"/>
<circle cx="193.6" cy="198.0" r="8" fill="#ff7e00" fill-opacity="0.45"/>
<circle cx="47.8" cy="199.2" r="10.6" fill="#00e400" fill-opacity="0.78"/>
<circle cx="47.8" cy="199.2" r="8" fill="#00e400" fill-opacity="0.45"/>
<circle cx="228.0" cy="199.2" r="10.6" fill="#ff0000" fill-opacity="0.78"/>
<circle cx="228.0" cy="199.2" r="8" fill="#ff0000" fill-opacity="0.45"/>
<circle cx="422.5" cy="202.7" r="10.6" fill="#00e400" fill-opacity="0.78"/>
<circle cx="422.5" cy="202.7" r="8" fill="#00e400" fill-opacity="0.45"/>
<circle cx="15.6" cy="203.6" r="10.6" fill="#00e400" fill-opacity="0.78"/>
<circle cx="15.6" cy="203.6" r="8" fill="#00e400" fill-opacity="0.45"/>
<circle cx="191.8" cy="216.0" r="10.6" fill="#ffff00" fill-opacity="0.78"/>
<circle cx="191.8" cy="216.0" r="8" fill="#ffff00" fill-opacity="0.45"/>
<circle cx="277.7" cy="205.0" r="10.6" fill="#ff7e00" fill-opacity="0.78"/>
<circle cx="277.7" cy="205.0" r="8" fill="#ff7e00" fill-opacity="0.45"/>
<circle cx="211.4" cy="205.4" r="10.6" fill="#ff0000" fill-opacity="0.78"/>
<circle cx="211.4" cy="205.4" r="8" fill="#ff0000" fill-opacity="0.45"/>
<circle cx="165.4" cy="205.7" r="10.6" fill="#9a9a9a" fill-opacity="0.78"/>
<circle cx="165.4" cy="205.7" r="8" fill="#9a9a9a" fill-opacity="0.45"/>
<circle cx="366.0" cy="210.7" r="10.6" fill="#ffff00" fill-opacity="0.78"/>
<circle cx="366.0" cy="210.7" r="8" fill="#ffff00" fill-opacity="0.45"/>
<circle cx="202.2" cy="211.0" r="10.6" fill="#9a9a9a" fill-opacity="0.78"/>
<circle cx="202.2" cy="211.0" r="8" fill="#9a9a9a" fill-opacity="0.45"/>
<circle cx="184.6" cy="212.0" r="10.6" fill="#9a9a9a" fill-opacity="0.78"/>
<circle cx="184.6" cy="212.0" r="8" fill="#9a9a9a" fill-opacity="0.45"/>
<circle cx="36.5" cy="214.7" r="10.6" fill="#ffff00" fill-opacity="0.78"/>
<circle cx="36.5" cy="214.7" r="8" fill="#ffff00" fill-opacity="0.45"/>
<circle cx="411.8" cy="219.0" r="10.6" fill="#00e400" fill-opacity="0.78"/>
<circle cx="411.8" cy="219.0" r="8" fill="#00e400" fill-opacity="0.45"/>
<circle cx="263.0" cy="223.0" r="10.6" fill="#ff7e00" fill-opacity="0.78"/>
<circle cx="263.0" cy="223.0" r="8" fill="#ff7e00" fill-opacity="0.45"/>
<circle cx="215.0" cy="224.2" r="10.6" fill="#9a9a9a" fill-opacity="0.78"/>
<circle cx="215.0" cy="224.2" r="8" fill="#9a9a9a" fill-opacity="0.45"/>
<circle cx="258.7" cy="229.6" r="10.6" fill="#ff7e00" fill-opacity="0.78"/>
<circle cx="258.7" cy="229.6" r="8" fill="#ff7e00" fill-opacity="0.45"/>
<circle cx="228.0" cy="233.0" r="10.6" fill="#9a9a9a" fill-opacity="0.78"/>
<circle cx="228.0" cy="233.0" r="8" fill="#9a9a9a" fill-opacity="0.45"/>
<circle cx="423.0" cy="239.0" r="10.6" fill="#ffff00" fill-opacity="0.78"/>
<circle cx="423.0" cy="239.0" r="8" fill="#ffff00" fill-opacity="0.45"/>
<circle cx="275.0" cy="227.4" r="10.6" fill="#00e400" fill-opacity="0.78"/>
<circle cx="275.0" cy="227.4" r="8" fill="#00e400" fill-opacity="0.45"/>
<circle cx="30.3" cy="251.5" r="10.6" fill="#9a9a9a" fill-opacity="0.78"/>
<circle cx="30.3" cy="251.5" r="8" fill="#9a9a9a" fill-opacity="0.45"/>
<circle cx="296.8" cy="266.3" r="10.6" fill="#9a9a9a" fill-opacity="0.78"/>
<circle cx="296.8" cy="266.3" r="8" fill="#9a9a9a" fill-opacity="0.45"/>
<circle cx="70.5" cy="303.7" r="10.6" fill="#9a9a9a" fill-opacity="0.78"/>
<circle cx="70.5" cy="303.7" r="8" fill="#9a9a9a" fill-opacity="0.45"/>
<g transform="translate(423.5,110.7) scale(0.84,1)"><text class="ml">N/A</text><text class="ml2">N/A</text></g>
<g transform="translate(256.7,114.4) scale(0.84,1)"><text class="ml">53</text><text class="ml2">53</text></g>
<g transform="translate(355.0,124.2) scale(0.84,1)"><text class="ml">118</text><text class="ml2">118</text></g>
<g transform="translate(360.0,125.2) scale(0.84,1)"><text class="ml">182</text><text class="ml2">182</text></g>
<g transform="translate(240.5,126.9) scale(0.84,1)"><text class="ml">68</text><text class="ml2">68</text></g>
<g transform="translate(232.4,121.7) scale(0.84,1)"><text class="ml">56</text><text class="ml2">56</text></g>
<g transform="translate(459.0,129.2) scale(0.84,1)"><text class="ml">N/A</text><text class="ml2">N/A</text></g>
<g transform="translate(341.4,130.2) scale(0.84,1)"><text class="ml">167</text><text class="ml2">167</text></g>
<g transform="translate(303.0,132.0) scale(0.84,1)"><text class="ml">N/A</text><text class="ml2">N/A</text></g>
<g transform="translate(290.5,134.7) scale(0.84,1)"><text class="ml">N/A</text><text class="ml2">N/A</text></g>
<g transform="translate(443.5,135.3) scale(0.84,1)"><text class="ml">96</text><text class="ml2">96</text></g>
<g transform="translate(340.0,138.2) scale(0.84,1)"><text class="ml">117</text><text class="ml2">117</text></g>
<g transform="translate(319.7,139.4) scale(0.84,1)"><text class="ml">92</text><text class="ml2">92</text></g>
<g transform="translate(201.8,143.3) scale(0.84,1)"><text class="ml">52</text><text class="ml2">52</text></g>
<g transform="translate(347.4,150.3) scale(0.84,1)"><text class="ml">162</text><text class="ml2">162</text></g>
<g transform="translate(290.0,152.7) scale(0.84,1)"><text class="ml">N/A</text><text class="ml2">N/A</text></g>
<g transform="translate(354.7,156.7) scale(0.84,1)"><text class="ml">178</text><text class="ml2">178</text></g>
<g transform="translate(259.3,157.0) scale(0.84,1)"><text class="ml">72</text><text class="ml2">72</text></g>
<g transform="translate(272.5,156.0) scale(0.84,1)"><text class="ml">12</text><text class="ml2">12</text></g>
<g transform="translate(454.7,157.7) scale(0.84,1)"><text class="ml">64</text><text class="ml2">64</text></g>
<g transform="translate(300.0,159.7) scale(0.84,1)"><text class="ml">77</text><text class="ml2">77</text></g>
<g transform="translate(359.0,164.2) scale(0.84,1)"><text class="ml">154</text><text class="ml2">154</text></g>
<g transform="translate(377.5,164.5) scale(0.84,1)"><text class="ml">104</text><text class="ml2">104</text></g>
<g transform="translate(338.2,172.1) scale(0.84,1)"><text class="ml">172</text><text class="ml2">172</text></g>
<g transform="translate(292.0,173.7) scale(0.84,1)"><text class="ml">N/A</text><text class="ml2">N/A</text></g>
<g transform="translate(303.5,173.7) scale(0.84,1)"><text class="ml">75</text><text class="ml2">75</text></g>
<g transform="translate(316.0,172.2) scale(0.84,1)"><text class="ml">74</text><text class="ml2">74</text></g>
<g transform="translate(391.0,175.7) scale(0.84,1)"><text class="ml">93</text><text class="ml2">93</text></g>
<g transform="translate(385.0,177.2) scale(0.84,1)"><text class="ml">179</text><text class="ml2">179</text></g>
<g transform="translate(437.0,177.4) scale(0.84,1)"><text class="ml">154</text><text class="ml2">154</text></g>
<g transform="translate(278.8,180.2) scale(0.84,1)"><text class="ml">57</text><text class="ml2">57</text></g>
<g transform="translate(419.0,180.7) scale(0.84,1)"><text class="ml">79</text><text class="ml2">79</text></g>
<g transform="translate(349.4,186.0) scale(0.84,1)"><text class="ml">158</text><text class="ml2">158</text></g>
<g transform="translate(363.3,188.7) scale(0.84,1)"><text class="ml">91</text><text class="ml2">91</text></g>
<g transform="translate(415.0,190.2) scale(0.84,1)"><text class="ml">118</text><text class="ml2">118</text></g>
<g transform="translate(399.8,191.7) scale(0.84,1)"><text class="ml">121</text><text class="ml2">121</text></g>
<g transform="translate(265.0,194.6) scale(0.84,1)"><text class="ml">N/A</text><text class="ml2">N/A</text></g>
<g transform="translate(1.7,194.7) scale(0.84,1)"><text class="ml">N/A</text><text class="ml2">N/A</text></g>
<g transform="translate(158.0,196.2) scale(0.84,1)"><text class="ml">166</text><text class="ml2">166</text></g>
<g transform="translate(366.3,199.0) scale(0.84,1)"><text class="ml">122</text><text class="ml2">122</text></g>
<g transform="translate(177.0,200.7) scale(0.84,1)"><text class="ml">146</text><text class="ml2">146</text></g>
<g transform="translate(193.6,200.7) scale(0.84,1)"><text class="ml">114</text><text class="ml2">114</text></g>
<g transform="translate(47.8,201.9) scale(0.84,1)"><text class="ml">21</text><text class="ml2">21</text></g>
<g transform="translate(228.0,201.9) scale(0.84,1)"><text class="ml">188</text><text class="ml2">188</text></g>
<g transform="translate(422.5,205.4) scale(0.84,1)"><text class="ml">42</text><text class="ml2">42</text></g>
<g transform="translate(15.6,206.3) scale(0.84,1)"><text class="ml">22</text><text class="ml2">22</text></g>
<g transform="translate(191.8,218.7) scale(0.84,1)"><text class="ml">8</text><text class="ml2">8</text></g>
<g transform="translate(277.7,207.7) scale(0.84,1)"><text class="ml">104</text><text class="ml2">104</text></g>
<g transform="translate(211.4,208.1) scale(0.84,1)"><text class="ml">184</text><text class="ml2">184</text></g>
<g transform="translate(165.4,208.4) scale(0.84,1)"><text class="ml">N/A</text><text class="ml2">N/A</text></g>
<g transform="translate(366.0,213.4) scale(0.84,1)"><text class="ml">58</text><text class="ml2">58</text></g>
<g transform="translate(202.2,213.7) scale(0.84,1)"><text class="ml">N/A</text><text class="ml2">N/A</text></g>
<g transform="translate(184.6,214.7) scale(0.84,1)"><text class="ml">N/A</text><text class="ml2">N/A</text></g>
<g transform="translate(36.5,217.4) scale(0.84,1)"><text class="ml">86</text><text class="ml2">86</text></g>
<g transform="translate(411.8,221.7) scale(0.84,1)"><text class="ml">25</text><text class="ml2">25</text></g>
<g transform="translate(263.0,225.7) scale(0.84,1)"><text class="ml">114</text><text class="ml2">114</text></g>
<g transform="translate(215.0,226.9) scale(0.84,1)"><text class="ml">N/A</text><text class="ml2">N/A</text></g>
<g transform="translate(258.7,232.3) scale(0.84,1)"><text class="ml">131</text><text class="ml2">131</text></g>
<g transform="translate(228.0,235.7) scale(0.84,1)"><text class="ml">N/A</text><text class="ml2">N/A</text></g>
<g transform="translate(423.0,241.7) scale(0.84,1)"><text class="ml">60</text><text class="ml2">60</text></g>
<g transform="translate(275.0,230.1) scale(0.84,1)"><text class="ml">39</text><text class="ml2">39</text></g>
<g transform="translate(30.3,254.2) scale(0.84,1)"><text class="ml">N/A</text><text class="ml2">N/A</text></g>
<g transform="translate(296.8,269.0) scale(0.84,1)"><text class="ml">N/A</text><text class="ml2">N/A</text></g>
<g transform="translate(70.5,306.4) scale(0.84,1)"><text class="ml">N/A</text><text class="ml2">N/A</text></g>
</svg>
</div>
<div class="abs tip"></div>
<div class="abs popup">
 <div class="pt" style="top:10px">Bishkek</div>
 <div style="position:absolute;left:41.5px;top:10.5px;width:1px;height:11px;background:#222"></div>
 <div class="pt" style="top:21.5px">2023-02-03 6:00 PM</div>
 <div class="pt" style="top:33px">(LT)</div>
 <div class="ptab">
  <div style="position:absolute;left:0;top:0;width:95px;height:21.5px;background:#0b4a85"></div>
  <div style="position:absolute;left:8.5px;top:3px;font-weight:bold;font-size:10.5px;color:#fff;line-height:12px">Pollutant</div>
  <div style="position:absolute;left:69px;top:3px;font-weight:bold;font-size:10.5px;color:#fff;line-height:12px">AQI</div>
  <div style="position:absolute;left:61px;top:21.5px;width:34px;height:22.5px;background:#ff7e00;border-left:1px solid #0b4a85"></div>
  <div style="position:absolute;left:15px;top:26px;font-size:10.5px;color:#333;line-height:12px">PM2.5</div>
  <div style="position:absolute;left:71px;top:26px;font-weight:bold;font-size:10.5px;color:#fff;line-height:12px">118</div>
 </div>
</div>

<div class="abs sh" style="top:2px">Select a City</div>
<div class="abs sel" style="top:30px">Bishkek<span class="x">×</span><span class="ar"></span></div>
<div class="abs sh" style="top:73px">Select a Parameter</div>
<div class="abs sel" style="top:101px">PM2.5<span class="x">×</span><span class="ar"></span></div>
<div class="abs box"><div class="b">Bishkek</div>
 <svg class="rss" viewBox="0 0 26 26"><rect width="26" height="26" fill="#f2b13e"/>
  <circle cx="5.6" cy="20.2" r="2.6" fill="#fff"/>
  <path d="M3 11.2 A11.8 11.8 0 0 1 14.8 23" stroke="#fff" stroke-width="3.4" fill="none"/>
  <path d="M3 4.3 A18.7 18.7 0 0 1 21.7 23" stroke="#fff" stroke-width="3.4" fill="none"/>
 </svg>
</div>
<div class="abs note">Note: Values above 500 are considered Beyond the AQI. Follow<br>recommendations for the Hazardous category. Additional<br>information on reducing exposure to extremely high levels of particle<br>pollution is available <a>here</a>.</div>

<div class="abs tab tab1">AQI</div>
<div class="abs tab tab2">Concentration</div>
<div class="abs tab tab3">Historical</div>
<div class="abs tline"></div>
<div class="abs learn">Learn more about how the Air Quality Index [AQI] is calculated from the EPA <a>here</a>.</div>

<div class="abs chartp">
<svg class="chart" width="596" height="266" viewBox="0 0 596 266">
<text x="298" y="17.6" class="ct">Bishkek – PM2.5</text>
<rect x="56" y="156.2" width="533" height="1" fill="#e6e6e6"/>
<rect x="56" y="128.6" width="533" height="1" fill="#e6e6e6"/>
<rect x="56" y="101.1" width="533" height="1" fill="#e6e6e6"/>
<rect x="56" y="73.5" width="533" height="1" fill="#e6e6e6"/>
<rect x="56" y="46.0" width="533" height="1" fill="#e6e6e6"/>
<text x="45" y="186.6" class="yl">0</text>
<text x="45" y="159.1" class="yl">100</text>
<text x="45" y="131.5" class="yl">200</text>
<text x="45" y="104.0" class="yl">300</text>
<text x="45" y="76.4" class="yl">400</text>
<text x="45" y="48.9" class="yl">500</text>
<text transform="translate(21.5,112) rotate(-90)" class="at">AQI</text>
<rect x="61.6" y="139.3" width="12" height="44.9" fill="#ff0000" stroke="#222" stroke-width="1"/>
<rect x="83.8" y="127.7" width="12" height="56.5" fill="#8f0048" stroke="#222" stroke-width="1"/>
<rect x="106.0" y="126.3" width="12" height="57.9" fill="#8f0048" stroke="#222" stroke-width="1"/>
<rect x="128.2" y="131.3" width="12" height="52.9" fill="#ff0000" stroke="#222" stroke-width="1"/>
<rect x="150.4" y="136.5" width="12" height="47.7" fill="#ff0000" stroke="#222" stroke-width="1"/>
<rect x="172.6" y="140.4" width="12" height="43.8" fill="#ff0000" stroke="#222" stroke-width="1"/>
<rect x="194.9" y="146.5" width="12" height="37.7" fill="#ff7e00" stroke="#222" stroke-width="1"/>
<rect x="217.1" y="153.3" width="12" height="30.9" fill="#ff7e00" stroke="#222" stroke-width="1"/>
<rect x="239.3" y="158.0" width="12" height="26.2" fill="#ffff00" stroke="#222" stroke-width="1"/>
<rect x="261.5" y="157.2" width="12" height="27.0" fill="#ffff00" stroke="#222" stroke-width="1"/>
<rect x="283.7" y="159.7" width="12" height="24.5" fill="#ffff00" stroke="#222" stroke-width="1"/>
<rect x="305.9" y="161.6" width="12" height="22.6" fill="#ffff00" stroke="#222" stroke-width="1"/>
<rect x="328.1" y="164.4" width="12" height="19.8" fill="#ffff00" stroke="#222" stroke-width="1"/>
<rect x="350.3" y="165.5" width="12" height="18.7" fill="#ffff00" stroke="#222" stroke-width="1"/>
<rect x="372.5" y="165.5" width="12" height="18.7" fill="#ffff00" stroke="#222" stroke-width="1"/>
<rect x="394.7" y="162.7" width="12" height="21.5" fill="#ffff00" stroke="#222" stroke-width="1"/>
<rect x="416.9" y="144.8" width="12" height="39.4" fill="#ff7e00" stroke="#222" stroke-width="1"/>
<rect x="439.1" y="144.0" width="12" height="40.2" fill="#ff7e00" stroke="#222" stroke-width="1"/>
<rect x="461.4" y="152.2" width="12" height="32.0" fill="#ff7e00" stroke="#222" stroke-width="1"/>
<rect x="483.6" y="156.7" width="12" height="27.6" fill="#ffff00" stroke="#222" stroke-width="1"/>
<rect x="505.8" y="156.7" width="12" height="27.6" fill="#ffff00" stroke="#222" stroke-width="1"/>
<rect x="528.0" y="158.0" width="12" height="26.2" fill="#ffff00" stroke="#222" stroke-width="1"/>
<rect x="550.2" y="158.0" width="12" height="26.2" fill="#ffff00" stroke="#222" stroke-width="1"/>
<rect x="572.4" y="151.7" width="12" height="32.5" fill="#ff7e00" stroke="#222" stroke-width="1"/>
<rect x="56" y="183.7" width="533" height="1" fill="#ccd6eb"/>
<rect x="55.5" y="184.2" width="1" height="7.5" fill="#ccd6eb"/>
<rect x="77.7" y="184.2" width="1" height="7.5" fill="#ccd6eb"/>
<rect x="99.9" y="184.2" width="1" height="7.5" fill="#ccd6eb"/>
<rect x="122.1" y="184.2" width="1" height="7.5" fill="#ccd6eb"/>
<rect x="144.3" y="184.2" width="1" height="7.5" fill="#ccd6eb"/>
<rect x="166.5" y="184.2" width="1" height="7.5" fill="#ccd6eb"/>
<rect x="188.8" y="184.2" width="1" height="7.5" fill="#ccd6eb"/>
<rect x="211.0" y="184.2" width="1" height="7.5" fill="#ccd6eb"/>
<rect x="233.2" y="184.2" width="1" height="7.5" fill="#ccd6eb"/>
<rect x="255.4" y="184.2" width="1" height="7.5" fill="#ccd6eb"/>
<rect x="277.6" y="184.2" width="1" height="7.5" fill="#ccd6eb"/>
<rect x="299.8" y="184.2" width="1" height="7.5" fill="#ccd6eb"/>
<rect x="322.0" y="184.2" width="1" height="7.5" fill="#ccd6eb"/>
<rect x="344.2" y="184.2" width="1" height="7.5" fill="#ccd6eb"/>
<rect x="366.4" y="184.2" width="1" height="7.5" fill="#ccd6eb"/>
<rect x="388.6" y="184.2" width="1" height="7.5" fill="#ccd6eb"/>
<rect x="410.8" y="184.2" width="1" height="7.5" fill="#ccd6eb"/>
<rect x="433.0" y="184.2" width="1" height="7.5" fill="#ccd6eb"/>
<rect x="455.2" y="184.2" width="1" height="7.5" fill="#ccd6eb"/>
<rect x="477.5" y="184.2" width="1" height="7.5" fill="#ccd6eb"/>
<rect x="499.7" y="184.2" width="1" height="7.5" fill="#ccd6eb"/>
<rect x="521.9" y="184.2" width="1" height="7.5" fill="#ccd6eb"/>
<rect x="544.1" y="184.2" width="1" height="7.5" fill="#ccd6eb"/>
<rect x="566.3" y="184.2" width="1" height="7.5" fill="#ccd6eb"/>
<rect x="588.5" y="184.2" width="1" height="7.5" fill="#ccd6eb"/>
<text transform="translate(69.6,197.7) rotate(-45)" class="xl">7 PM</text>
<text transform="translate(91.8,197.7) rotate(-45)" class="xl">8 PM</text>
<text transform="translate(114.0,197.7) rotate(-45)" class="xl">9 PM</text>
<text transform="translate(136.2,197.7) rotate(-45)" class="xl">10 PM</text>
<text transform="translate(158.4,197.7) rotate(-45)" class="xl">11 PM</text>
<text transform="translate(180.6,197.7) rotate(-45)" class="xl">Feb 03, 2023 12 AM</text>
<text transform="translate(202.9,197.7) rotate(-45)" class="xl">1 AM</text>
<text transform="translate(225.1,197.7) rotate(-45)" class="xl">2 AM</text>
<text transform="translate(247.3,197.7) rotate(-45)" class="xl">3 AM</text>
<text transform="translate(269.5,197.7) rotate(-45)" class="xl">4 AM</text>
<text transform="translate(291.7,197.7) rotate(-45)" class="xl">5 AM</text>
<text transform="translate(313.9,197.7) rotate(-45)" class="xl">6 AM</text>
<text transform="translate(336.1,197.7) rotate(-45)" class="xl">7 AM</text>
<text transform="translate(358.3,197.7) rotate(-45)" class="xl">8 AM</text>
<text transform="translate(380.5,197.7) rotate(-45)" class="xl">9 AM</text>
<text transform="translate(402.7,197.7) rotate(-45)" class="xl">10 AM</text>
<text transform="translate(424.9,197.7) rotate(-45)" class="xl">11 AM</text>
<text transform="translate(447.1,197.7) rotate(-45)" class="xl">12 PM</text>
<text transform="translate(469.4,197.7) rotate(-45)" class="xl">1 PM</text>
<text transform="translate(491.6,197.7) rotate(-45)" class="xl">2 PM</text>
<text transform="translate(513.8,197.7) rotate(-45)" class="xl">3 PM</text>
<text transform="translate(536.0,197.7) rotate(-45)" class="xl">4 PM</text>
<text transform="translate(558.2,197.7) rotate(-45)" class="xl">5 PM</text>
<text transform="translate(580.4,197.7) rotate(-45)" class="xl">6 PM</text>
</svg>
</div>

<div class="abs cc">
 <div class="cch">
  <div style="position:absolute;left:0;width:186px;top:6px;font-size:11.25px;line-height:13px">Current Conditions</div>
  <div style="position:absolute;left:0;width:186px;top:23px;font-size:9px;line-height:11px">observed at</div>
  <div style="position:absolute;left:0;width:186px;top:37px;font-size:11.25px;line-height:13px">Feb 3, 2023 6:00 PM (LT)</div>
 </div>
 <div class="cco">
  <div style="position:absolute;left:0;width:186px;top:11px">118 AQI<br>Unhealthy for Sensitive<br>Groups<br>PM2.5</div>
 </div>
 <div class="hm">
  <div style="position:absolute;left:0;width:186px;top:8.5px;text-align:center;font-weight:bold;font-size:9px;line-height:11px">Health Message</div>
  <div style="position:absolute;left:5px;top:25px;width:185px;white-space:nowrap;font-size:9px;line-height:16.4px">When AQI values are between 101 and 150,<br>members of sensitive groups may<br>experience health effects, but the general<br>public is unlikely to be affected.</div>
 </div>
</div>
</body></html>
